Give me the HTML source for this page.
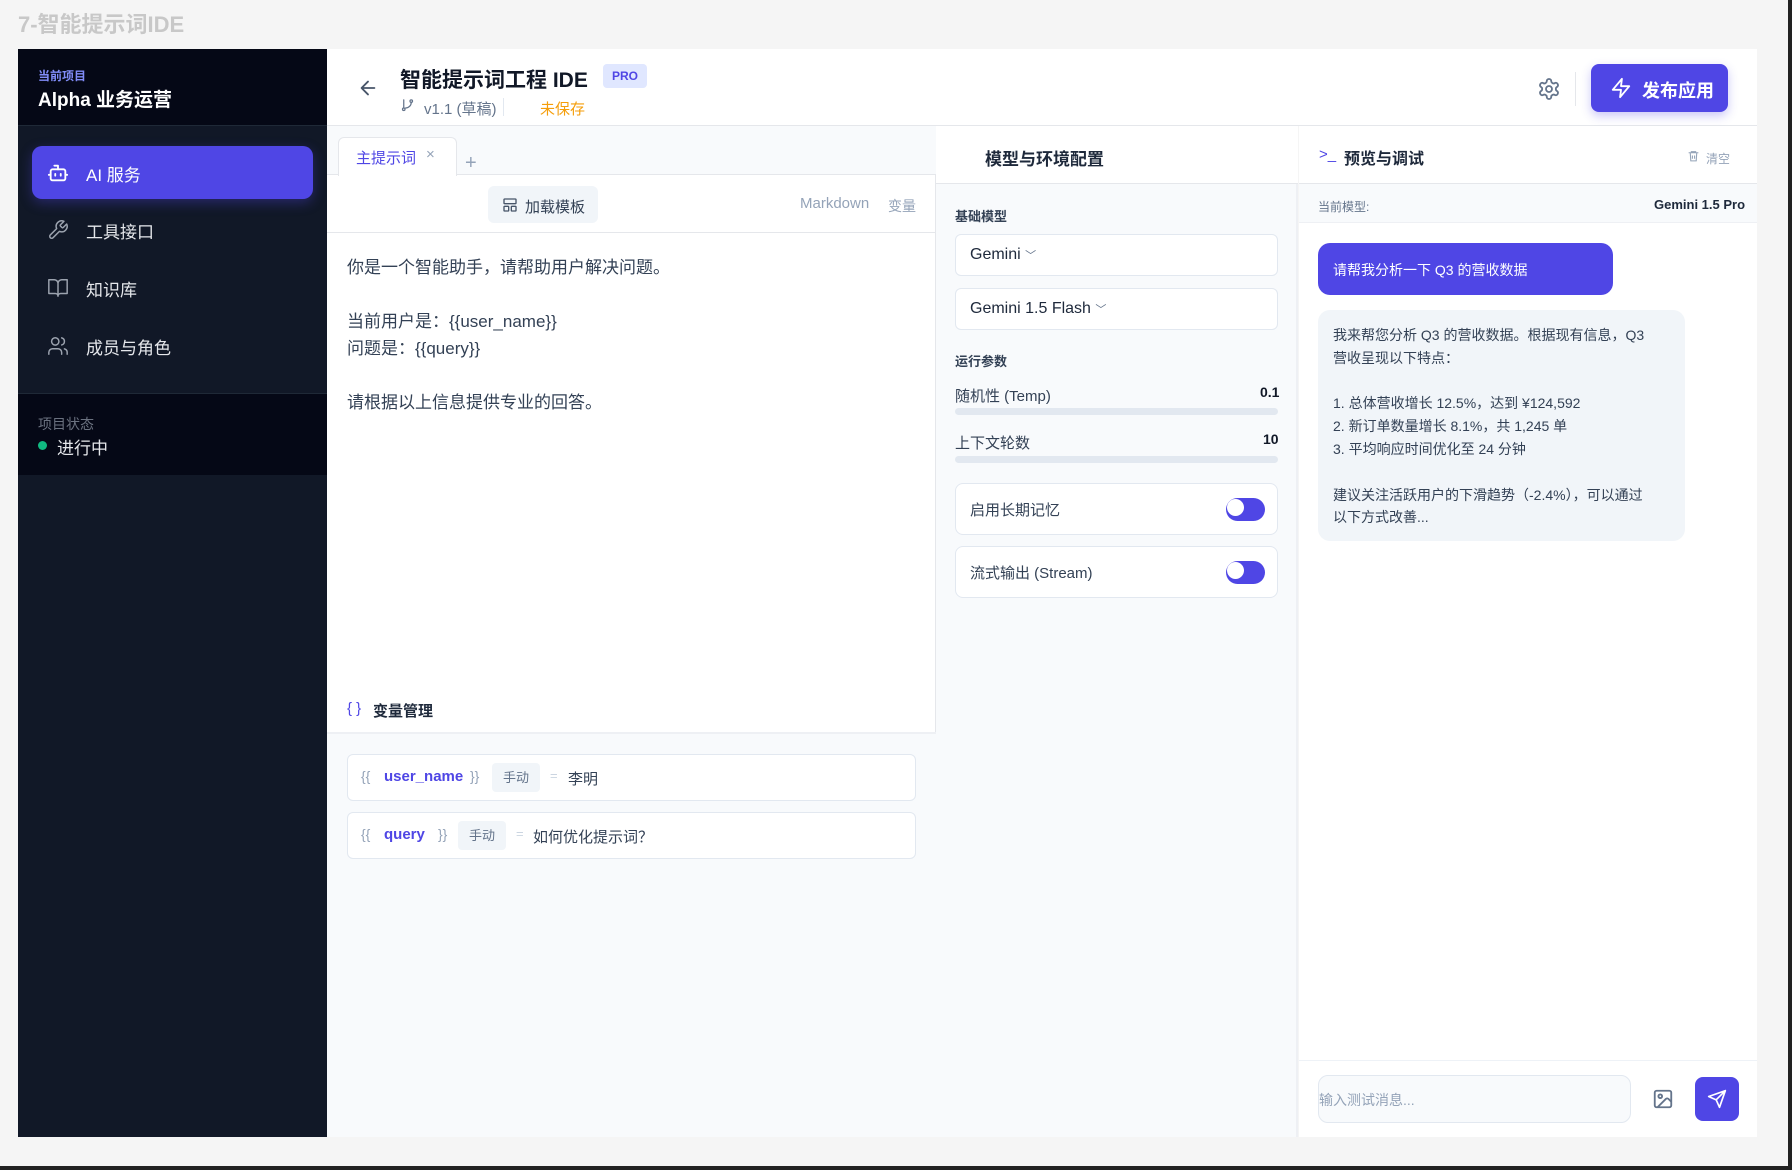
<!DOCTYPE html>
<html><head><meta charset="utf-8">
<style>
*{box-sizing:border-box;margin:0;padding:0}
body{width:1792px;height:1170px;background:#f5f5f5;font-family:"Liberation Sans","Noto Sans CJK SC",sans-serif;position:relative;overflow:hidden;color:#1e293b}
.a{position:absolute}
.t{white-space:nowrap}
svg{display:block}
</style></head><body>
<div class="a t" style="left:18px;top:7px;font-size:22px;color:#c8c8c8;font-weight:bold">7-智能提示词IDE</div>
<div class="a" style="left:0;top:1166px;width:1792px;height:4px;background:#222"></div>
<div class="a" style="left:1788px;top:0;width:4px;height:1170px;background:#222"></div>

<!-- sidebar -->
<div class="a" style="left:18px;top:49px;width:309px;height:1088px;background:#111827"></div>
<div class="a" style="left:18px;top:49px;width:309px;height:77px;background:#050816;border-bottom:1px solid #1f2937"></div>
<div class="a t" style="left:38px;top:67px;font-size:12px;color:#818cf8;font-weight:bold">当前项目</div>
<div class="a t" style="left:38px;top:85px;font-size:19px;color:#fff;font-weight:bold">Alpha 业务运营</div>
<div class="a" style="left:32px;top:146px;width:281px;height:53px;background:#4f46e5;border-radius:10px;box-shadow:0 4px 12px rgba(79,70,229,.35)"></div>
<svg class="a" style="left:47px;top:162px" width="22" height="22" viewBox="0 0 24 24" fill="none" stroke="#fff" stroke-width="2" stroke-linecap="round" stroke-linejoin="round"><rect x="4" y="8" width="16" height="12" rx="2"/><path d="M12 8V4H8M2 14h2M20 14h2M9 13v2M15 13v2"/></svg>
<div class="a t" style="left:86px;top:161px;font-size:17px;color:#fff">AI 服务</div>
<svg class="a" style="left:47px;top:219px" width="22" height="22" viewBox="0 0 24 24" fill="none" stroke="#9ca3af" stroke-width="1.6" stroke-linecap="round" stroke-linejoin="round"><path d="M14.7 6.3a1 1 0 0 0 0 1.4l1.6 1.6a1 1 0 0 0 1.4 0l3.770-3.77a6 6 0 0 1-7.94 7.94l-6.91 6.91a2.12 2.12 0 0 1-3-3l6.91-6.91a6 6 0 0 1 7.94-7.94l-3.76 3.76z"/></svg>
<div class="a t" style="left:86px;top:218px;font-size:17px;color:#e5e7eb">工具接口</div>
<svg class="a" style="left:47px;top:277px" width="22" height="22" viewBox="0 0 24 24" fill="none" stroke="#9ca3af" stroke-width="1.6" stroke-linecap="round" stroke-linejoin="round"><path d="M2 3h6a4 4 0 0 1 4 4v14a3 3 0 0 0-3-3H2zM22 3h-6a4 4 0 0 0-4 4v14a3 3 0 0 1 3-3h7z"/></svg>
<div class="a t" style="left:86px;top:276px;font-size:17px;color:#e5e7eb">知识库</div>
<svg class="a" style="left:47px;top:335px" width="22" height="22" viewBox="0 0 24 24" fill="none" stroke="#9ca3af" stroke-width="1.6" stroke-linecap="round" stroke-linejoin="round"><circle cx="9" cy="7" r="4"/><path d="M16 21v-2a4 4 0 0 0-4-4H6a4 4 0 0 0-4 4v2M16 3.13a4 4 0 0 1 0 7.75M22 21v-2a4 4 0 0 0-3-3.87"/></svg>
<div class="a t" style="left:86px;top:334px;font-size:17px;color:#e5e7eb">成员与角色</div>
<div class="a" style="left:18px;top:393px;width:309px;height:82px;background:#050816;border-top:1px solid #1f2937"></div>
<div class="a t" style="left:38px;top:414px;font-size:14px;color:#6b7280">项目状态</div>
<div class="a" style="left:38px;top:441px;width:9px;height:9px;border-radius:50%;background:#10b981"></div>
<div class="a t" style="left:57px;top:434px;font-size:17px;color:#e5e7eb">进行中</div>

<!-- header -->
<div class="a" style="left:327px;top:49px;width:1430px;height:77px;background:#fff;border-bottom:1px solid #e5e7eb"></div>
<svg class="a" style="left:357px;top:77px" width="22" height="22" viewBox="0 0 24 24" fill="none" stroke="#475569" stroke-width="2" stroke-linecap="round" stroke-linejoin="round"><path d="M19 12H5M12 19l-7-7 7-7"/></svg>
<div class="a t" style="left:400px;top:64px;font-size:21px;font-weight:bold;color:#111827">智能提示词工程 IDE</div>
<div class="a t" style="left:603px;top:64px;width:44px;height:24px;background:#e0e7ff;color:#4f46e5;border-radius:4px;font-size:12px;font-weight:bold;text-align:center;line-height:24px">PRO</div>
<svg class="a" style="left:400px;top:98px" width="15" height="15" viewBox="0 0 24 24" fill="none" stroke="#64748b" stroke-width="2" stroke-linecap="round"><circle cx="6" cy="18" r="2"/><circle cx="18" cy="5" r="2"/><path d="M6 3v13M18 7a9 9 0 0 1-9 9"/></svg>
<div class="a t" style="left:424px;top:98px;font-size:15px;color:#64748b">v1.1 (草稿)</div>
<div class="a" style="left:503px;top:98px;width:1px;height:18px;background:#e2e8f0"></div>
<div class="a t" style="left:540px;top:98px;font-size:15px;color:#f59e0b">未保存</div>
<svg class="a" style="left:1537px;top:77px" width="24" height="24" viewBox="0 0 24 24" fill="none" stroke="#64748b" stroke-width="1.8" stroke-linecap="round" stroke-linejoin="round"><path d="M12.22 2h-.44a2 2 0 0 0-2 2v.18a2 2 0 0 1-1 1.730l-.43.25a2 2 0 0 1-2 0l-.15-.08a2 2 0 0 0-2.73.73l-.22.38a2 2 0 0 0 .73 2.73l.15.1a2 2 0 0 1 1 1.72v.51a2 2 0 0 1-1 1.74l-.15.09a2 2 0 0 0-.73 2.73l.22.38a2 2 0 0 0 2.73.73l.15-.08a2 2 0 0 1 2 0l.43.25a2 2 0 0 1 1 1.73V20a2 2 0 0 0 2 2h.44a2 2 0 0 0 2-2v-.18a2 2 0 0 1 1-1.73l.43-.25a2 2 0 0 1 2 0l.15.08a2 2 0 0 0 2.73-.73l.22-.39a2 2 0 0 0-.73-2.73l-.15-.08a2 2 0 0 1-1-1.74v-.5a2 2 0 0 1 1-1.74l.15-.09a2 2 0 0 0 .73-2.73l-.22-.38a2 2 0 0 0-2.73-.73l-.15.08a2 2 0 0 1-2 0l-.43-.25a2 2 0 0 1-1-1.73V4a2 2 0 0 0-2-2z"/><circle cx="12" cy="12" r="3"/></svg>
<div class="a" style="left:1575px;top:72px;width:1px;height:34px;background:#e5e7eb"></div>
<div class="a" style="left:1591px;top:64px;width:137px;height:48px;background:#4f46e5;border-radius:8px;box-shadow:0 4px 10px rgba(79,70,229,.3)"></div>
<svg class="a" style="left:1610px;top:77px" width="22" height="22" viewBox="0 0 24 24" fill="none" stroke="#fff" stroke-width="2" stroke-linejoin="round"><path d="M13 2L3 14h9l-1 8 10-12h-9l1-8z"/></svg>
<div class="a t" style="left:1642px;top:77px;font-size:18px;color:#fff;font-weight:bold">发布应用</div>

<!-- editor -->
<div class="a" style="left:327px;top:126px;width:609px;height:1011px;background:#fff;border-right:1px solid #e5e7eb"></div>
<div class="a" style="left:327px;top:126px;width:609px;height:49px;background:#f8fafc;border-bottom:1px solid #e5e7eb"></div>
<div class="a" style="left:338px;top:137px;width:119px;height:39px;background:#fff;border:1px solid #e5e7eb;border-bottom:none;border-radius:6px 6px 0 0"></div>
<div class="a t" style="left:356px;top:147px;font-size:15px;color:#4f46e5">主提示词</div>
<div class="a t" style="left:426px;top:146px;font-size:15px;color:#94a3b8">×</div>
<div class="a t" style="left:465px;top:152px;font-size:20px;color:#94a3b8;font-weight:300">+</div>
<div class="a" style="left:327px;top:232px;width:609px;height:1px;background:#e5e7eb"></div>
<div class="a" style="left:488px;top:186px;width:110px;height:37px;background:#f1f5f9;border-radius:6px"></div>
<svg class="a" style="left:502px;top:197px" width="16" height="16" viewBox="0 0 24 24" fill="none" stroke="#475569" stroke-width="2"><rect x="3" y="3" width="18" height="7" rx="1"/><rect x="3" y="14" width="7" height="7" rx="1"/><rect x="14" y="14" width="7" height="7" rx="1"/></svg>
<div class="a t" style="left:525px;top:196px;font-size:15px;color:#334155">加载模板</div>
<div class="a t" style="left:800px;top:195px;font-size:15px;color:#94a3b8">Markdown</div>
<div class="a t" style="left:888px;top:196px;font-size:14px;color:#94a3b8">变量</div>
<div class="a t" style="left:347px;top:254px;font-size:17px;color:#334155;line-height:27px">你是一个智能助手，请帮助用户解决问题。<br><br>当前用户是：{{user_name}}<br>问题是：{{query}}<br><br>请根据以上信息提供专业的回答。</div>
<div class="a t" style="left:347px;top:700px;font-size:15px;color:#4f46e5">{ }</div>
<div class="a t" style="left:373px;top:700px;font-size:15px;color:#1e293b;font-weight:bold">变量管理</div>
<div class="a" style="left:327px;top:732px;width:609px;height:405px;background:#f8fafc;border-top:2px solid #eef0f4"></div>
<div class="a" style="left:347px;top:754px;width:569px;height:47px;background:#fff;border:1px solid #e2e8f0;border-radius:6px"></div>
<div class="a t" style="left:361px;top:768px;font-size:14px;color:#94a3b8">{{</div>
<div class="a t" style="left:384px;top:768px;font-size:15px;color:#4f46e5;font-weight:bold">user_name</div>
<div class="a t" style="left:470px;top:768px;font-size:14px;color:#94a3b8">}}</div>
<div class="a t" style="left:492px;top:763px;width:48px;height:29px;background:#f1f5f9;border-radius:4px;font-size:13px;color:#64748b;text-align:center;line-height:29px">手动</div>
<div class="a t" style="left:550px;top:768px;font-size:13px;color:#cbd5e1">=</div>
<div class="a t" style="left:568px;top:768px;font-size:15px;color:#334155">李明</div>
<div class="a" style="left:347px;top:812px;width:569px;height:47px;background:#fff;border:1px solid #e2e8f0;border-radius:6px"></div>
<div class="a t" style="left:361px;top:826px;font-size:14px;color:#94a3b8">{{</div>
<div class="a t" style="left:384px;top:826px;font-size:15px;color:#4f46e5;font-weight:bold">query</div>
<div class="a t" style="left:438px;top:826px;font-size:14px;color:#94a3b8">}}</div>
<div class="a t" style="left:458px;top:821px;width:48px;height:29px;background:#f1f5f9;border-radius:4px;font-size:13px;color:#64748b;text-align:center;line-height:29px">手动</div>
<div class="a t" style="left:516px;top:826px;font-size:13px;color:#cbd5e1">=</div>
<div class="a t" style="left:533px;top:826px;font-size:15px;color:#334155">如何优化提示词？</div>

<!-- config -->
<div class="a" style="left:936px;top:126px;width:362px;height:1011px;background:#f8fafc;border-right:2px solid #eef0f4"></div>
<div class="a" style="left:936px;top:126px;width:362px;height:58px;background:#fff;border-bottom:1px solid #e5e7eb"></div>
<div class="a t" style="left:985px;top:145px;font-size:17px;color:#1e293b;font-weight:bold">模型与环境配置</div>
<div class="a t" style="left:955px;top:206px;font-size:13px;color:#334155;font-weight:bold">基础模型</div>
<div class="a" style="left:955px;top:234px;width:323px;height:42px;background:#fff;border:1px solid #e2e8f0;border-radius:6px"></div>
<div class="a t" style="left:970px;top:246px;font-size:16px;color:#1e293b">Gemini <span style="font-size:11px;color:#64748b">﹀</span></div>
<div class="a" style="left:955px;top:288px;width:323px;height:42px;background:#fff;border:1px solid #e2e8f0;border-radius:6px"></div>
<div class="a t" style="left:970px;top:300px;font-size:16px;color:#1e293b">Gemini 1.5 Flash <span style="font-size:11px;color:#64748b">﹀</span></div>
<div class="a t" style="left:955px;top:351px;font-size:13px;color:#334155;font-weight:bold">运行参数</div>
<div class="a t" style="left:955px;top:385px;font-size:15px;color:#334155">随机性 (Temp)</div>
<div class="a t" style="left:1260px;top:384px;font-size:14px;color:#111827;font-weight:bold">0.1</div>
<div class="a" style="left:955px;top:408px;width:323px;height:7px;background:#e2e8f0;border-radius:4px"></div>
<div class="a t" style="left:955px;top:432px;font-size:15px;color:#334155">上下文轮数</div>
<div class="a t" style="left:1263px;top:431px;font-size:14px;color:#111827;font-weight:bold">10</div>
<div class="a" style="left:955px;top:456px;width:323px;height:7px;background:#e2e8f0;border-radius:4px"></div>
<div class="a" style="left:955px;top:483px;width:323px;height:52px;background:#fff;border:1px solid #e2e8f0;border-radius:8px"></div>
<div class="a t" style="left:970px;top:499px;font-size:15px;color:#334155">启用长期记忆</div>
<div class="a" style="left:1226px;top:498px;width:39px;height:23px;background:#4f46e5;border-radius:12px"></div>
<div class="a" style="left:1227px;top:499px;width:17px;height:17px;background:#fff;border-radius:50%"></div>
<div class="a" style="left:955px;top:546px;width:323px;height:52px;background:#fff;border:1px solid #e2e8f0;border-radius:8px"></div>
<div class="a t" style="left:970px;top:562px;font-size:15px;color:#334155">流式输出 (Stream)</div>
<div class="a" style="left:1226px;top:561px;width:39px;height:23px;background:#4f46e5;border-radius:12px"></div>
<div class="a" style="left:1227px;top:562px;width:17px;height:17px;background:#fff;border-radius:50%"></div>

<!-- preview -->
<div class="a" style="left:1299px;top:126px;width:458px;height:1011px;background:#fff"></div>
<div class="a" style="left:1299px;top:183px;width:458px;height:1px;background:#e5e7eb"></div>
<div class="a t" style="left:1319px;top:146px;font-size:15px;color:#4f46e5">&gt;_</div>
<div class="a t" style="left:1344px;top:145px;font-size:16px;color:#1e293b;font-weight:bold">预览与调试</div>
<svg class="a" style="left:1687px;top:149px" width="13" height="14" viewBox="0 0 24 24" fill="none" stroke="#94a3b8" stroke-width="2"><path d="M3 6h18M8 6V4h8v2M6 6l1 15h10l1-15M10 11v6M14 11v6"/></svg>
<div class="a t" style="left:1706px;top:150px;font-size:12px;color:#94a3b8">清空</div>
<div class="a" style="left:1299px;top:184px;width:458px;height:39px;background:#f8fafc;border-bottom:1px solid #eef0f4"></div>
<div class="a t" style="left:1318px;top:198px;font-size:12px;color:#64748b">当前模型:</div>
<div class="a t" style="left:1654px;top:197px;font-size:13px;color:#1e293b;font-weight:bold">Gemini 1.5 Pro</div>
<div class="a" style="left:1318px;top:243px;width:295px;height:52px;background:#4f46e5;border-radius:12px"></div>
<div class="a t" style="left:1333px;top:260px;font-size:14px;color:#fff">请帮我分析一下 Q3 的营收数据</div>
<div class="a" style="left:1318px;top:310px;width:367px;height:231px;background:#f1f5f9;border-radius:12px"></div>
<div class="a t" style="left:1333px;top:324px;font-size:14px;color:#334155;line-height:22.8px">我来帮您分析 Q3 的营收数据。根据现有信息，Q3<br>营收呈现以下特点：<br><br>1. 总体营收增长 12.5%，达到 ¥124,592<br>2. 新订单数量增长 8.1%，共 1,245 单<br>3. 平均响应时间优化至 24 分钟<br><br>建议关注活跃用户的下滑趋势（-2.4%），可以通过<br>以下方式改善...</div>
<div class="a" style="left:1299px;top:1060px;width:458px;height:1px;background:#eef2f7"></div>
<div class="a" style="left:1318px;top:1075px;width:313px;height:48px;background:#f8fafc;border:1px solid #e2e8f0;border-radius:10px"></div>
<div class="a t" style="left:1319px;top:1090px;font-size:14px;color:#94a3b8">输入测试消息...</div>
<svg class="a" style="left:1652px;top:1088px" width="22" height="22" viewBox="0 0 24 24" fill="none" stroke="#64748b" stroke-width="2" stroke-linejoin="round"><rect x="3" y="3" width="18" height="18" rx="2"/><circle cx="9" cy="9" r="2"/><path d="M21 15l-3.1-3.1a2 2 0 0 0-2.8 0L6 21"/></svg>
<div class="a" style="left:1695px;top:1077px;width:44px;height:44px;background:#4f46e5;border-radius:8px"></div>
<svg class="a" style="left:1707px;top:1089px" width="20" height="20" viewBox="0 0 24 24" fill="none" stroke="#fff" stroke-width="2" stroke-linejoin="round" stroke-linecap="round"><path d="M22 2L11 13M22 2l-7 20-4-9-9-4 20-7z"/></svg>
</body></html>
